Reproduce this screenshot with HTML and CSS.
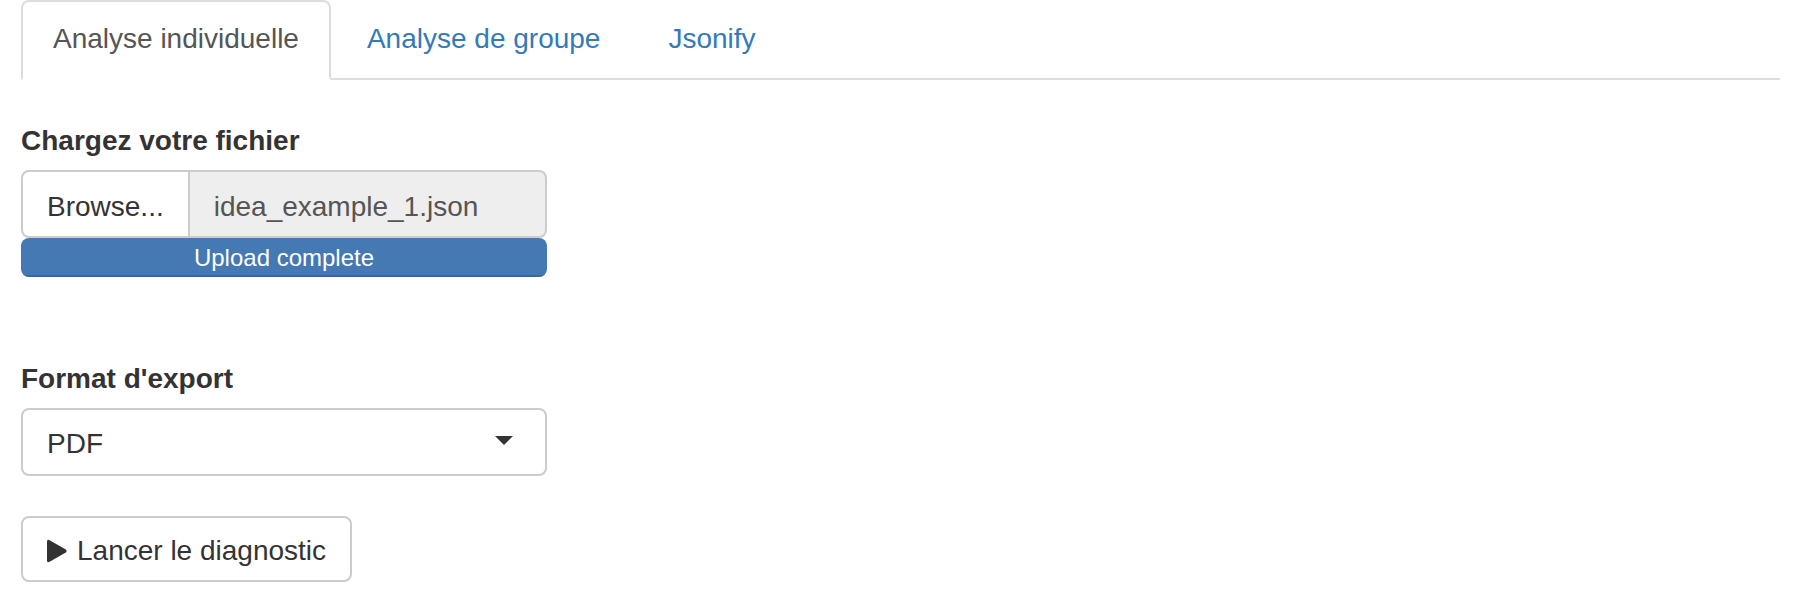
FILE: index.html
```
<!DOCTYPE html>
<html lang="fr">
<head>
<meta charset="utf-8">
<title>Analyse individuelle</title>
<link rel="stylesheet" href="styles.css">
</head>
<body>
<div class="page">
  <ul class="tabs">
    <li class="tab active"><a>Analyse individuelle</a></li>
    <li class="tab"><a>Analyse de groupe</a></li>
    <li class="tab"><a>Jsonify</a></li>
  </ul>
  <div class="tab-content">
    <div class="form-group file-group">
      <label class="control-label">Chargez votre fichier</label>
      <div class="input-group">
        <span class="browse">Browse...</span>
        <span class="file-name">idea_example_1.json</span>
      </div>
      <div class="progress"><div class="progress-bar">Upload complete</div></div>
    </div>
    <div class="form-group select-group">
      <label class="control-label">Format d'export</label>
      <div class="select">
        <span class="select-value">PDF</span>
        <span class="caret"></span>
      </div>
    </div>
    <button class="btn" type="button">
      <svg class="play" viewBox="0 0 20 24" width="20" height="24" aria-hidden="true"><path d="M2.6 1.2 L18.8 10.6 Q20.4 12 18.8 13.4 L2.6 22.8 Q0 24.2 0 21.3 V2.7 Q0 -0.2 2.6 1.2 Z"/></svg>
      <span class="btn-label">Lancer le diagnostic</span>
    </button>
  </div>
</div>
</body>
</html>
```
FILE: styles.css
```
* { box-sizing: border-box; }
html, body { margin: 0; background: #fff; }
body {
  font-family: "Liberation Sans", Arial, Helvetica, sans-serif;
  font-size: 28px;
  line-height: 40px;
  color: #333;
}
.page { padding: 0 16px 0 21px; }

.tabs {
  list-style: none;
  margin: 0;
  padding: 0;
  display: flex;
  border-bottom: 2px solid #ddd;
}
.tab { margin: 0 4px -2px 0; }
.tab a {
  display: block;
  padding: 17px 30px 19px;
  border: 2px solid transparent;
  border-radius: 8px 8px 0 0;
  color: #337ab7;
  cursor: pointer;
}
.tab.active a {
  color: #555;
  background: #fff;
  border-color: #ddd #ddd transparent;
}

.tab-content { padding-top: 41px; }
.form-group { width: 526px; }
.control-label {
  display: block;
  font-weight: bold;
  margin-bottom: 9px;
}
.file-group { margin-bottom: 82px; }

.input-group { display: flex; height: 68px; }
.browse {
  padding: 15px 24px 9px;
  border: 2px solid #ccc;
  border-radius: 8px 0 0 8px;
  background: #fff;
  color: #333;
}
.file-name {
  flex: 1;
  padding: 15px 24px 9px;
  border: 2px solid #ccc;
  border-left: 0;
  border-radius: 0 8px 8px 0;
  background: #eee;
  color: #555;
}
.progress {
  height: 39px;
  border-radius: 8px;
  background: #f5f5f5;
  overflow: hidden;
}
.progress-bar {
  height: 100%;
  padding-top: 3px;
  background: #4479b3;
  color: #fff;
  font-size: 24px;
  line-height: 34px;
  text-align: center;
  box-shadow: inset 0 -2px 0 rgba(0, 0, 0, 0.15);
}

.select-group { margin-bottom: 40px; }
.select {
  height: 68px;
  display: flex;
  align-items: center;
  justify-content: space-between;
  padding: 0 32px 0 24px;
  border: 2px solid #ccc;
  border-radius: 8px;
  background: #fff;
}
.select-value { padding-top: 4px; }
.caret {
  width: 0;
  height: 0;
  border-left: 9px solid transparent;
  border-right: 9px solid transparent;
  border-top: 9px solid #333;
  margin-top: -4px;
}

.btn {
  display: inline-flex;
  align-items: center;
  gap: 10px;
  height: 66px;
  padding: 0 24px;
  border: 2px solid #ccc;
  border-radius: 8px;
  background: #fff;
  color: #333;
  font: inherit;
  line-height: 40px;
  cursor: pointer;
}
.btn-label { padding-top: 4px; }
.play { fill: #333; flex: none; margin-top: 3px; }
```
